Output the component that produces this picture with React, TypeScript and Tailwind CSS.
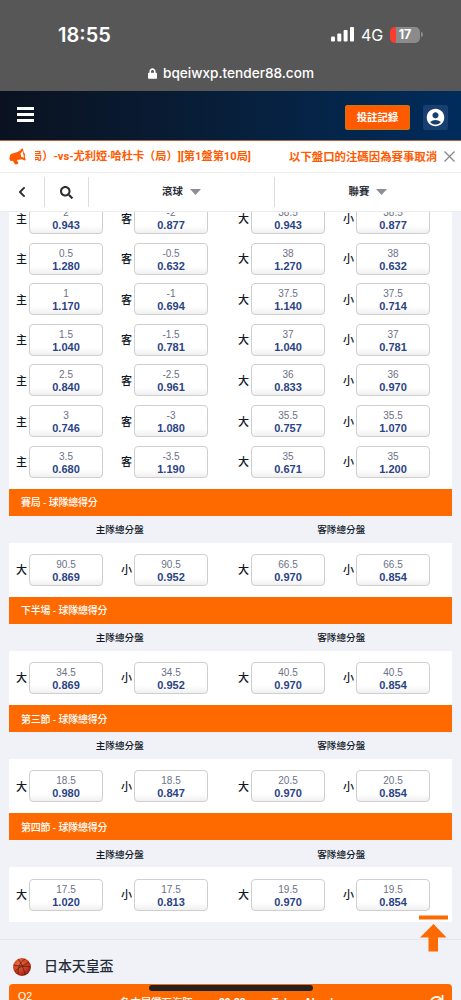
import { FaSearch, FaChevronLeft, FaLock } from "react-icons/fa";
import { MdAccountCircle } from "react-icons/md";

type Bet = [string, string, string];

const rows: Bet[][] = [
    [["主", "2", "0.943"], ["客", "-2", "0.877"], ["大", "38.5", "0.943"], ["小", "38.5", "0.877"]],
    [["主", "0.5", "1.280"], ["客", "-0.5", "0.632"], ["大", "38", "1.270"], ["小", "38", "0.632"]],
    [["主", "1", "1.170"], ["客", "-1", "0.694"], ["大", "37.5", "1.140"], ["小", "37.5", "0.714"]],
    [["主", "1.5", "1.040"], ["客", "-1.5", "0.781"], ["大", "37", "1.040"], ["小", "37", "0.781"]],
    [["主", "2.5", "0.840"], ["客", "-2.5", "0.961"], ["大", "36", "0.833"], ["小", "36", "0.970"]],
    [["主", "3", "0.746"], ["客", "-3", "1.080"], ["大", "35.5", "0.757"], ["小", "35.5", "1.070"]],
    [["主", "3.5", "0.680"], ["客", "-3.5", "1.190"], ["大", "35", "0.671"], ["小", "35", "1.200"]],
];

const sections: { title: string; bets: Bet[] }[] = [
    { title: "賽局 - 球隊總得分", bets: [["大", "90.5", "0.869"], ["小", "90.5", "0.952"], ["大", "66.5", "0.970"], ["小", "66.5", "0.854"]] },
    { title: "下半場 - 球隊總得分", bets: [["大", "34.5", "0.869"], ["小", "34.5", "0.952"], ["大", "40.5", "0.970"], ["小", "40.5", "0.854"]] },
    { title: "第三節 - 球隊總得分", bets: [["大", "18.5", "0.980"], ["小", "18.5", "0.847"], ["大", "20.5", "0.970"], ["小", "20.5", "0.854"]] },
    { title: "第四節 - 球隊總得分", bets: [["大", "17.5", "1.020"], ["小", "17.5", "0.813"], ["大", "19.5", "0.970"], ["小", "19.5", "0.854"]] },
];

function OddsRow({ bets }: { bets: Bet[] }) {
    return (
        <div className="grid grid-cols-[105px_117px_105px_1fr] h-[40.55px] items-center pl-[7px]">
            {bets.map(([side, line, odds], i) => (
                <div key={i} className="flex items-center">
                    <span className="w-[13px] pt-px text-[11px] leading-4 font-medium text-[#111827] whitespace-nowrap">{side}</span>
                    <div className="w-[74px] h-8 shrink-0 rounded-[4px] border border-[#cfcfcf] bg-linear-to-b from-white from-75% to-[#f0f0f0] flex flex-col items-center pt-[4px]">
                        <span className="text-[10px] leading-[12px] text-[#6b7186]">{line}</span>
                        <span className="text-[11px] leading-[12px] font-bold text-[#2b4384]">{odds}</span>
                    </div>
                </div>
            ))}
        </div>
    );
}

function Section({ title, bets }: { title: string; bets: Bet[] }) {
    return (
        <div className="h-[108.3px]">
            <div className="h-[27px] bg-[#ff6a00] text-white text-[10px] font-medium flex items-center pt-px pl-[12px] tracking-[-0.25px]">{title}</div>
            <div className="h-[27px] bg-[#f0f2f7] grid grid-cols-2 items-center pt-[2px] text-center text-[9.6px] font-medium text-[#111827]">
                <span>主隊總分盤</span>
                <span>客隊總分盤</span>
            </div>
            <div className="h-[54.3px] bg-white flex flex-col justify-center">
                <OddsRow bets={bets} />
            </div>
        </div>
    );
}

function StatusBar() {
    return (
        <div className="h-[91px] shrink-0 bg-[#575757] text-white">
            <div className="flex h-[61px] items-center pt-[8px] pl-[58px] pr-[38px] justify-between">
                <span className="font-[Inter] text-[20px] font-semibold">18:55</span>
                <div className="flex items-center">
                    <svg width="24" height="15" viewBox="0 0 24 15" fill="currentColor">
                        <rect x="0" y="9.5" width="4" height="5" rx="1" />
                        <rect x="6.3" y="6.5" width="4" height="8" rx="1" />
                        <rect x="12.6" y="3" width="4" height="11.5" rx="1" />
                        <rect x="19" y="0" width="4" height="14.5" rx="1" />
                    </svg>
                    <span className="ml-[6px] w-[29px] font-[Inter] text-[16px]">4G</span>
                    <div className="w-[30px] h-4 rounded-[5px] bg-linear-to-r from-[#ff3b30] from-[19%] to-[#8b8b8b] to-[19%] text-center font-[Inter] text-[12.5px] leading-4 font-bold">17</div>
                    <div className="ml-[1px] w-[2px] h-[5px] rounded-r bg-[#8b8b8b]"></div>
                </div>
            </div>
            <div className="flex items-center pl-[148px] h-6">
                <FaLock className="w-[9px] h-[11px]" />
                <span className="ml-[6px] font-[Inter] text-[13.6px] font-medium whitespace-nowrap">bqeiwxp.tender88.com</span>
            </div>
        </div>
    );
}

function Header() {
    return (
        <div className="h-[49px] shrink-0 bg-linear-to-r from-[#0a1220] via-[#071f3b] to-[#002c5c] flex items-center pl-[17px] pr-[13px]">
            <div className="flex flex-col gap-[3px] mb-[3px]">
                <div className="w-[17px] h-[3px] bg-white"></div>
                <div className="w-[17px] h-[3px] bg-white"></div>
                <div className="w-[17px] h-[3px] bg-white"></div>
            </div>
            <div className="ml-auto mt-[4px] w-[65px] h-[25px] border border-[#c27a18] rounded-[2px] bg-[#ff5a00] text-white text-[10.4px] font-bold flex items-center justify-center">投註記錄</div>
            <div className="ml-[13px] mt-[4px] w-[25px] h-[25px] rounded-[2px] bg-[#173f70] flex items-center justify-center text-white">
                <MdAccountCircle size={21} />
            </div>
        </div>
    );
}

function Megaphone() {
    return (
        <svg className="shrink-0" width="18" height="17" viewBox="0 0 18 17" fill="#ff5a00">
            <path d="M9.200 3.600C11 3 12 1.800 12.600.500l1.300.200 1 4.300c1.300.300 1.700 1.700.800 2.700l1 4.200-1.100.7C14 11.700 12.500 11.200 10.900 11.300z" />
            <path d="M10 3.500l1.700 8-3.900.500 1.700 3-1.200 1.200-2.200.300-2.300-3.700-1.500.300C.8 13 .2 10.800.6 9.400c.1-1.900.8-3.100 2-3.700z" />
            <path d="M13.400 2.800l1.700 6.900C14.300 9.200 13.300 9 12.300 9l-.8-3.500c.9-.6 1.500-1.500 1.900-2.700z" fill="white" />
        </svg>
    );
}

function Notice() {
    return (
        <div className="h-[33px] shrink-0 bg-white border-t border-[#b3643c] border-b border-b-[#eeeeee] flex items-center pl-[9px] pr-[6px] text-[#ff5a00] text-[11.2px] font-bold whitespace-nowrap">
            <Megaphone />
            <div className="ml-[8px] w-[403px] h-4 leading-4 overflow-hidden flex [text-spacing-trim:space-all] font-['Roboto','Noto_Sans_CJK_TC',sans-serif]">
                <span className="-ml-[4px] w-[258px] shrink-0">局）-vs-尤利婭·哈杜卡（局）][第1盤第10局]</span>
                <span className="shrink-0 text-[11.4px]">以下盤口的注碼因為賽事取消</span>
            </div>
            <svg className="ml-auto shrink-0" width="11" height="11" viewBox="0 0 11 11" stroke="#85888f" strokeWidth="1.3">
                <path d="M.5.5l10 10M10.5.5l-10 10" />
            </svg>
        </div>
    );
}

function Caret() {
    return (
        <svg className="ml-[7px]" width="11" height="6" viewBox="0 0 11 6" fill="#8c8f97">
            <path d="M0 0h11L5.500 6z" />
        </svg>
    );
}

function Filters() {
    return (
        <div className="h-[39px] shrink-0 bg-white border-b border-[#ececee] flex items-center text-[10.4px] font-bold text-[#2b3036]">
            <div className="w-[45px] h-[30px] border-r border-[#dddddf] flex items-center justify-center">
                <FaChevronLeft size={12} />
            </div>
            <div className="w-[44px] h-[30px] border-r border-[#dddddf] flex items-center justify-center">
                <FaSearch size={13} />
            </div>
            <div className="w-[186px] h-[30px] border-r border-[#dddddf] flex items-center justify-center">滾球<Caret /></div>
            <div className="flex-1 flex items-center justify-center">聯賽<Caret /></div>
        </div>
    );
}

function Basketball() {
    return (
        <svg width="18" height="18" viewBox="0 0 18 18">
            <defs>
                <radialGradient id="ball" cx=".35" cy=".3" r=".8">
                    <stop offset="0" stopColor="#ec6a3a" />
                    <stop offset=".6" stopColor="#c93a20" />
                    <stop offset="1" stopColor="#7e1a12" />
                </radialGradient>
            </defs>
            <circle cx="9" cy="9" r="9" fill="url(#ball)" />
            <path d="M1 7c5 2 10 1 15-3M5 1c3 4 6 9 7 16M2 14c3-5 8-7 15-5M12 1c-5 3-7 8-7 15" fill="none" stroke="#5a1d14" strokeWidth=".8" />
        </svg>
    );
}

export default function App() {
    return (
        <div className="relative w-[461px] h-[1000px] overflow-hidden flex flex-col bg-[#f0f2f7] font-['Liberation_Sans','Noto_Sans_CJK_TC',sans-serif]">
            <StatusBar />
            <Header />
            <Notice />
            <Filters />
            <div className="mx-[9px] w-[443px] shrink-0 h-[710px] overflow-hidden">
                <div className="h-[276.5px] bg-white overflow-hidden flex flex-col">
                    <div className="-mt-[14px]">
                        {rows.map((bets, i) => <OddsRow key={i} bets={bets} />)}
                    </div>
                </div>
                {sections.map((s) => <Section key={s.title} {...s} />)}
            </div>
            <div className="mt-[17px] border-t border-[#e4e6eb] h-[45px] shrink-0 flex items-center pt-[9px] pl-[13px]">
                <Basketball />
                <span className="ml-[13px] text-[14px] font-medium text-[#252c38] tracking-[-0.1px]">日本天皇盃</span>
            </div>
            <div className="mx-[9px] w-[443px] h-[30px] shrink-0 bg-[#ff6a00] rounded-t-[4px] text-white text-[10.4px] flex pt-[5px]">
                <span className="ml-[9px] w-[102px] text-[10.5px] leading-[14px]">Q2</span>
                <span className="w-[99px] mt-[7px] leading-[14px] font-medium whitespace-nowrap">名古屋鑽石海豚</span>
                <span className="w-[53px] mt-[7px] leading-[14px] font-bold">39-33</span>
                <span className="mt-[7px] leading-[14px] font-bold">Tokyo Alvark</span>
                <svg className="ml-auto mr-[8px] mt-[6px]" width="15" height="15" viewBox="0 0 15 15" fill="none" stroke="white" strokeWidth="1.7">
                    <path d="M1.5 8a6 6 0 0 1 10.5-4M13.5 0v5h-5" />
                </svg>
            </div>
            <svg className="absolute left-[419px] top-[915px]" width="29" height="37" viewBox="0 0 29 37" fill="#ff6a00">
                <path d="M0 .5h29v4H0zM14.500 9l13 13.500h-8.500v14h-9.500v-14H1z" />
            </svg>
            <div className="absolute left-[149px] top-[985px] w-[164px] h-[6px] rounded-full bg-[#222222]"></div>
        </div>
    );
}
